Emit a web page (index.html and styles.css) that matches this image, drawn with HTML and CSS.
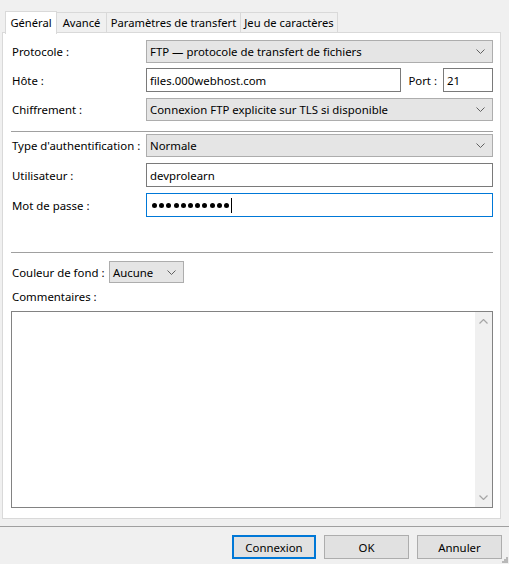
FILE: index.html
```html
<!DOCTYPE html>
<html lang="fr">
<head>
<meta charset="utf-8">
<title>Gestionnaire de sites</title>
<link rel="stylesheet" href="styles.css">
</head>
<body>
<div class="tabs">
  <div class="tab active t-gen">Général</div>
  <div class="tab t-adv">Avancé</div>
  <div class="tab t-par">Paramètres de transfert</div>
  <div class="tab t-jeu">Jeu de caractères</div>
</div>
<div class="panel">
  <div class="row r-proto">
    <div class="label">Protocole :</div>
    <div class="select grow"><span>FTP — protocole de transfert de fichiers</span><svg class="chev" width="9" height="5" viewBox="0 0 9 5"><polyline points="0.5,0.5 4.5,4.5 8.5,0.5" fill="none" stroke="#606060" stroke-width="1"/></svg></div>
  </div>
  <div class="row r-host">
    <div class="label">Hôte :</div>
    <div class="input grow">files.000webhost.com</div>
    <div class="port-label">Port :</div>
    <div class="input port">21</div>
  </div>
  <div class="row r-enc">
    <div class="label">Chiffrement :</div>
    <div class="select grow"><span>Connexion FTP explicite sur TLS si disponible</span><svg class="chev" width="9" height="5" viewBox="0 0 9 5"><polyline points="0.5,0.5 4.5,4.5 8.5,0.5" fill="none" stroke="#606060" stroke-width="1"/></svg></div>
  </div>
  <div class="sep sep1"></div>
  <div class="row r-auth">
    <div class="label">Type d'authentification :</div>
    <div class="select grow"><span>Normale</span><svg class="chev" width="9" height="5" viewBox="0 0 9 5"><polyline points="0.5,0.5 4.5,4.5 8.5,0.5" fill="none" stroke="#606060" stroke-width="1"/></svg></div>
  </div>
  <div class="row r-user">
    <div class="label">Utilisateur :</div>
    <div class="input grow">devprolearn</div>
  </div>
  <div class="row r-pass">
    <div class="label">Mot de passe :</div>
    <div class="input grow focus"><span class="dots"><i></i><i></i><i></i><i></i><i></i><i></i><i></i><i></i><i></i><i></i><i></i></span><span class="caret"></span></div>
  </div>
  <div class="sep sep2"></div>
  <div class="row r-color">
    <div class="label-inline">Couleur de fond :</div>
    <div class="select small"><span>Aucune</span><svg class="chev" width="9" height="5" viewBox="0 0 9 5"><polyline points="0.5,0.5 4.5,4.5 8.5,0.5" fill="none" stroke="#606060" stroke-width="1"/></svg></div>
  </div>
  <div class="comments-label">Commentaires :</div>
  <div class="textarea">
    <div class="scrollbar">
      <svg width="9" height="5" viewBox="0 0 9 5"><polyline points="0.5,4.5 4.5,0.5 8.5,4.5" fill="none" stroke="#a6a6a6" stroke-width="1.2"/></svg>
      <svg width="9" height="5" viewBox="0 0 9 5"><polyline points="0.5,0.5 4.5,4.5 8.5,0.5" fill="none" stroke="#a6a6a6" stroke-width="1.2"/></svg>
    </div>
  </div>
</div>
<div class="footer">
  <div class="btn default">Connexion</div>
  <div class="btn">OK</div>
  <div class="btn">Annuler</div>
  <svg class="grip" width="6" height="6" viewBox="0 0 6 6"><g fill="#b8b8b8"><rect x="4" y="0" width="2" height="2"/><rect x="2" y="2" width="2" height="2"/><rect x="4" y="2" width="2" height="2"/><rect x="0" y="4" width="2" height="2"/><rect x="2" y="4" width="2" height="2"/><rect x="4" y="4" width="2" height="2"/></g></svg>
</div>
</body>
</html>
```

FILE: styles.css
```css
* { box-sizing: border-box; }
html, body { margin: 0; padding: 0; }
body {
  width: 509px;
  height: 564px;
  background: #f0f0f0;
  font-family: "Noto Sans", "Liberation Sans", sans-serif;
  font-size: 11.4px;
  color: #000;
  overflow: hidden;
  position: relative;
}
.tabs {
  display: flex;
  align-items: flex-end;
  height: 33px;
  padding-left: 5px;
  position: relative;
  z-index: 2;
}
.tab {
  height: 20px;
  background: #f0f0f0;
  border: 1px solid #d9d9d9;
  border-bottom: none;
  border-left: none;
  display: flex;
  align-items: center;
  justify-content: center;
  margin-bottom: 1px;
  white-space: nowrap;
  font-size: 11.2px;
}
.tab.active {
  height: 23px;
  background: #fff;
  border-left: 1px solid #d9d9d9;
  margin-bottom: -1px;
  padding-bottom: 2px;
}
.t-gen { width: 52px; }
.t-adv { width: 50px; }
.t-par { width: 134px; }
.t-jeu { width: 97px; }
.panel {
  margin: -1px 8px 0 2px;
  height: 487px;
  background: #fff;
  border: 1px solid #d9d9d9;
  padding: 0 7px 8px 8px;
  position: relative;
  z-index: 1;
}
.row { display: flex; align-items: center; }
.label { width: 135px; flex: none; padding-left: 1px; white-space: nowrap; }
.label-inline { width: 98px; flex: none; padding-left: 1px; white-space: nowrap; }
.grow { flex: 1; }
.select {
  height: 23px;
  background: #e5e5e5;
  border: 1px solid #adadad;
  display: flex;
  align-items: center;
  justify-content: space-between;
  padding: 0 7px 0 3px;
  white-space: nowrap;
}
.select.small { width: 75px; height: 22px; }
.chev { flex: none; }
.input {
  height: 24px;
  background: #fff;
  border: 1px solid #7a7a7a;
  display: flex;
  align-items: center;
  padding: 0 3px;
  white-space: nowrap;
}
.input.focus { border-color: #0078d7; padding-left: 5px; }
.port-label { margin: 0 6px 0 7px; white-space: nowrap; }
.input.port { width: 50px; flex: none; }
.r-proto { margin-top: 7px; }
.r-host { margin-top: 5px; }
.r-enc { margin-top: 6px; }
.sep { height: 1px; background: #a0a0a0; }
.sep1 { margin-top: 10px; }
.r-auth { margin-top: 2px; }
.r-user { margin-top: 6px; }
.r-pass { margin-top: 6px; }
.sep2 { margin-top: 35px; }
.r-color { margin-top: 8px; }
.comments-label { margin-top: 5px; height: 17px; line-height: 17px; padding-left: 1px; }
.textarea {
  margin-top: 6px;
  height: 197px;
  border: 1px solid #828282;
  background: #fff;
  display: flex;
  justify-content: flex-end;
}
.scrollbar {
  width: 17px;
  background: #f0f0f0;
  display: flex;
  flex-direction: column;
  justify-content: space-between;
  align-items: center;
  padding: 7px 0 7px;
}
.dots { display: flex; gap: 2.2px; align-items: center; }
.dots i { display: block; width: 5px; height: 5px; border-radius: 50%; background: #000; }
.caret { display: block; width: 1px; height: 15px; background: #000; margin-left: 2px; }
.footer {
  margin-top: 7px;
  border-top: 1px solid #a0a0a0;
  height: 38px;
  display: flex;
  justify-content: flex-end;
  align-items: flex-start;
  padding: 8px 7px 0 0;
  gap: 8px;
  position: relative;
}
.btn {
  width: 85px;
  height: 24px;
  background: #e1e1e1;
  border: 1px solid #adadad;
  display: flex;
  align-items: center;
  justify-content: center;
}
.btn.default { width: 84px; border: 2px solid #0078d7; }
.grip { position: absolute; right: 1px; bottom: 1px; }
```
